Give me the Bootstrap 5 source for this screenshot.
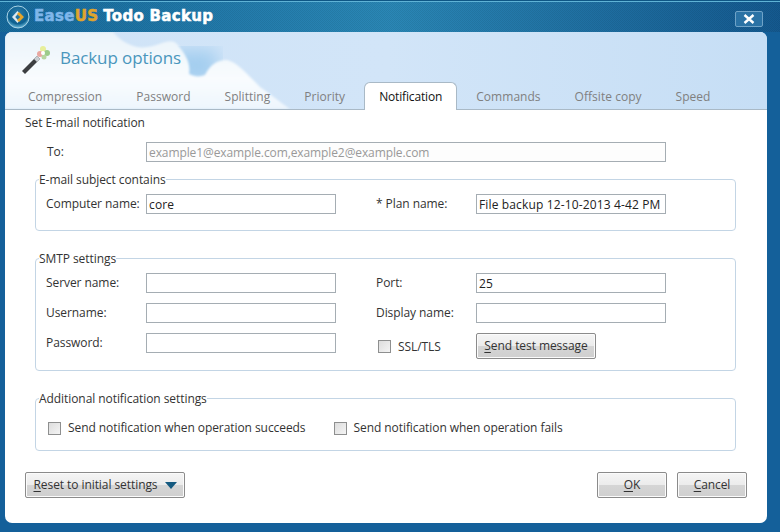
<!DOCTYPE html>
<html lang="en">
<head>
  <meta charset="UTF-8" />
  <title>Backup options</title>
  <link href="https://cdn.jsdelivr.net/npm/bootstrap@5.3.3/dist/css/bootstrap.min.css" rel="stylesheet" />
  <style>
    html, body { margin: 0; height: 532px; overflow: hidden; }
    body { background: #fff; font-family: "Open Sans", "DejaVu Sans", sans-serif; font-size: 12px; letter-spacing: -.07px; color: #333; }

    .app-window {
      width: 780px; height: 532px; padding: 0 13px 9px 5px;
      background: #14609a;
      border-top: 1px solid #0e5685;
    }
    .app-title {
      height: 31px; margin: 0 -13px 0 -5px; padding: 0 17px 0 6px;
      box-shadow: inset 0 1px 0 #5fb3d6;
      background:
        repeating-conic-gradient(rgba(0, 0, 0, .07) 0 25%, transparent 0 50%) 0 0 / 2px 2px,
        linear-gradient(90deg, #176a9c 0%, #2a87b6 50%, #14598f 100%);
    }
    .app-name { font-family: "DejaVu Sans", sans-serif; font-weight: 700; font-size: 15px; letter-spacing: .3px; color: #fff; margin-left: 4px; -webkit-text-stroke: .5px #fff; }
    .app-name b { color: #7fb6ea; font-weight: 700; -webkit-text-stroke: .5px #7fb6ea; }
    .app-name i { color: #e0a52c; font-style: normal; -webkit-text-stroke: .5px #e0a52c; margin-right: 5px; }
    .close-x { width: 28px; height: 16px; margin-top: 5px; border: 1px solid #6fa3c8; border-radius: 2px; background: #2a72a5; }

    .app-panel { height: 491px; background: #fff; border-radius: 7px; overflow: hidden; }
    .panel-head { height: 78px; position: relative; background: linear-gradient(90deg, #cfe3f7 0%, #d2e5f8 50%, #c6def5 100%); border-bottom: 1px solid #a9b9c6; }
    .head-cloud { position: absolute; left: 0; top: 0; }
    .head-row { position: relative; height: 50px; padding-left: 15px; }
    .head-row svg { margin-top: 4px; }
    .head-title { font-size: 17px; letter-spacing: -.1px; color: #4a96bc; margin-left: 8px; margin-top: 2px; }

    .nav-tabs.opt-tabs { position: relative; padding-left: 8px; gap: 4px; border: 0; height: 27px; }
    .opt-tabs .nav-link { padding: 6px 15px 0; height: 27px; line-height: 17px; letter-spacing: .03px; color: #808080; border: 0; background: none; border-radius: 0; }
    .opt-tabs .nav-link.active { color: #111; letter-spacing: -.15px; background: #fff; border: 1px solid #a9b9c6; border-bottom: 0; border-radius: 6px 6px 0 0; padding: 5px 14px 0; height: 28px; }

    .panel-body { padding: 4px 0 0 20px; }
    .line-label { height: 17px; line-height: 17px; }
    .form-line { display: grid; grid-template-columns: 100px 190px 40px 100px 190px; align-items: start; }
    .form-gap { row-gap: 10px; }
    .form-line label { margin: 0; line-height: 19px; }
    .form-control.plain-in { height: 20px; min-height: 20px; padding: 0 2px; font-size: 12px; line-height: 18px; letter-spacing: .14px; color: #222; border: 1px solid #a5adb3; border-radius: 0; }
    .plain-in::placeholder { color: #999; opacity: 1; letter-spacing: -.1px; }
    .to-line { padding: 11px 0 0 22px; grid-template-columns: 99px 520px; }
    .wide-in { background: #fdfdfd; }

    .opt-group { width: 701px; margin: 0 0 0 10px; padding: 0 10px 0; border: 1px solid #c3d5e5; border-radius: 4px; background: #fff; }
    .opt-group legend { float: none; width: auto; margin: 0 0 6px -7px; padding: 0; font-size: 12px; line-height: 17px; }
    .group-subject { height: 60px; margin-top: 9px; }
    .group-smtp { height: 121px; margin-top: 19px; }
    .group-more { height: 61px; margin-top: 19px; }

    .form-check-input.flat-box { float: none; width: 13px; height: 13px; margin: 0; background: linear-gradient(135deg, #ddd, #f4f4f4); border: 1px solid #8e8f8f; border-radius: 0; flex: none; }
    .more-line { padding: 6px 0 0 2px; }
    .more-line label { margin: 0 0 0 7px; }
    .more-line .second-box { margin-left: 28px; }
    .ssl-line { height: 26px; padding-left: 2px; gap: 7px; }

    .win-btn { padding: 0; height: 26px; font-size: 12px; letter-spacing: inherit; color: #333; border: 1px solid #8b8b8b; border-radius: 2px; background: linear-gradient(#f5f5f5 0%, #ececec 48%, #d5d5d5 52%, #cfcfcf 100%); box-shadow: inset 0 0 0 1px #fbfbfb; }
    .win-btn u { text-underline-offset: 2px; }
    .btn-test { width: 120px; }
    .btn-reset { width: 160px; }
    .btn-ok { width: 70px; }
    .foot-row { width: 722px; margin-top: 21px; }
    .foot-row .gap-fix { margin-left: 2px; }
    .caret-down { width: 0; height: 0; border: 6px solid transparent; border-top: 7px solid #155a80; border-bottom: 0; margin-left: 7px; }
  </style>
</head>
<body>
  <div class="app-window">
    <div class="app-title d-flex align-items-center">
      <svg width="24" height="24" viewBox="0 0 24 24">
        <defs>
          <radialGradient id="orb" cx="50%" cy="35%" r="65%"><stop offset="0" stop-color="#2f7fae"/><stop offset=".7" stop-color="#0d5f8e"/><stop offset="1" stop-color="#6fc0e0"/></radialGradient>
        </defs>
        <circle cx="12" cy="12" r="11" fill="url(#orb)" stroke="#a9d3e6" stroke-width="1"/>
        <path d="M11.500 6 L6 12 L11.500 18 L13 16.300 L9.200 12 L13 7.700Z" fill="#dfe9f0"/>
        <path d="M13 7 L18 12 L13 17 L11 15 L14.200 12 L11 9Z" fill="#e8a52a"/>
      </svg>
      <span class="app-name"><b>Ease</b><i>US</i>Todo Backup</span>
      <button class="close-x ms-auto d-flex align-items-center justify-content-center p-0" aria-label="Close">
        <svg width="12" height="10" viewBox="0 0 12 10"><path d="M1.500 1 L10.500 9 M10.500 1 L1.500 9" stroke="#fff" stroke-width="2.400"/></svg>
      </button>
    </div>

    <div class="app-panel">
      <div class="panel-head">
        <svg class="head-cloud" width="320" height="77" viewBox="0 0 320 77">
          <defs>
            <filter id="soft"><feGaussianBlur stdDeviation="1"/></filter>
            <filter id="softer"><feGaussianBlur stdDeviation="9"/></filter>
            <filter id="spark"><feGaussianBlur stdDeviation=".6"/></filter>
            <linearGradient id="cloudFill" x1="0" y1="0" x2="0" y2="1"><stop offset="0" stop-color="#eaf3fa"/><stop offset=".6" stop-color="#f9fcfe"/><stop offset="1" stop-color="#eef6fd"/></linearGradient>
          </defs>
          <path d="M160 18 L212 18 L212 50 L175 50Z" fill="#a2cdef" filter="url(#softer)"/>
          <path d="M0 0 L108 0 C118 12 132 17 142 15 C155 14 165 5 172 12 C180 22 186 30 184 42 C190 45 195 45 200 43 C205 33 212 28 222 28 C232 30 242 42 255 55 C266 62 274 70 285 77 L0 77Z" fill="url(#cloudFill)" filter="url(#soft)"/>
        </svg>
        <div class="head-row d-flex align-items-center">
          <svg width="32" height="32" viewBox="0 0 32 32">
            <path d="M2 28 L17 13 L20 16 L5 31Z" fill="#3d3f41"/>
            <path d="M14 16 L17 13 L20 16 L17 19Z" fill="#c9ced2"/>
            <g filter="url(#spark)">
              <circle cx="23" cy="6" r="3" fill="#e7ef9a"/>
              <circle cx="27" cy="10" r="3" fill="#9ccb8a"/>
              <circle cx="20" cy="11" r="3" fill="#e9a7a0"/>
              <circle cx="24" cy="14" r="2.500" fill="#b7d6a0"/>
              <circle cx="23" cy="10" r="2" fill="#fff"/>
            </g>
          </svg>
          <span class="head-title">Backup options</span>
        </div>
        <ul class="nav nav-tabs opt-tabs">
          <li class="nav-item"><a class="nav-link" href="#">Compression</a></li>
          <li class="nav-item"><a class="nav-link" href="#">Password</a></li>
          <li class="nav-item"><a class="nav-link" href="#">Splitting</a></li>
          <li class="nav-item"><a class="nav-link" href="#">Priority</a></li>
          <li class="nav-item"><a class="nav-link active" href="#">Notification</a></li>
          <li class="nav-item"><a class="nav-link" href="#">Commands</a></li>
          <li class="nav-item"><a class="nav-link" href="#">Offsite copy</a></li>
          <li class="nav-item"><a class="nav-link" href="#">Speed</a></li>
        </ul>
      </div>

      <div class="panel-body">
        <div class="line-label">Set E-mail notification</div>
        <div class="form-line to-line">
          <label for="mailTo">To:</label>
          <input id="mailTo" class="form-control plain-in wide-in" type="text" placeholder="example1@example.com,example2@example.com" />
        </div>

        <fieldset class="opt-group group-subject">
          <legend>E-mail subject contains</legend>
          <div class="form-line">
            <label for="compName">Computer name:</label>
            <input id="compName" class="form-control plain-in" type="text" value="core" />
            <span></span>
            <label for="planName">* Plan name:</label>
            <input id="planName" class="form-control plain-in" type="text" value="File backup 12-10-2013 4-42 PM" />
          </div>
        </fieldset>

        <fieldset class="opt-group group-smtp">
          <legend>SMTP settings</legend>
          <div class="form-line form-gap">
            <label for="srv">Server name:</label>
            <input id="srv" class="form-control plain-in" type="text" />
            <span></span>
            <label for="port">Port:</label>
            <input id="port" class="form-control plain-in" type="text" value="25" />

            <label for="user">Username:</label>
            <input id="user" class="form-control plain-in" type="text" />
            <span></span>
            <label for="disp">Display name:</label>
            <input id="disp" class="form-control plain-in" type="text" />

            <label for="pass">Password:</label>
            <input id="pass" class="form-control plain-in" type="password" />
            <span></span>
            <div class="ssl-line d-flex align-items-center">
              <input id="ssl" class="form-check-input flat-box ms-0" type="checkbox" />
              <label for="ssl">SSL/TLS</label>
            </div>
            <button class="btn win-btn btn-test" type="button"><u>S</u>end test message</button>
          </div>
        </fieldset>

        <fieldset class="opt-group group-more">
          <legend>Additional notification settings</legend>
          <div class="d-flex align-items-center more-line">
            <input id="okMail" class="form-check-input flat-box" type="checkbox" />
            <label for="okMail">Send notification when operation succeeds</label>
            <input id="failMail" class="form-check-input flat-box second-box" type="checkbox" />
            <label for="failMail">Send notification when operation fails</label>
          </div>
        </fieldset>

        <div class="foot-row d-flex align-items-center gap-2">
          <button class="btn win-btn btn-reset d-flex align-items-center justify-content-center" type="button"><span><u>R</u>eset to initial settings</span><span class="caret-down"></span></button>
          <button class="btn win-btn btn-ok ms-auto" type="button"><u>O</u>K</button>
          <button class="btn win-btn btn-ok gap-fix" type="button"><u>C</u>ancel</button>
        </div>
      </div>
    </div>
  </div>
  <script src="https://cdn.jsdelivr.net/npm/bootstrap@5.3.3/dist/js/bootstrap.bundle.min.js"></script>
</body>
</html>
